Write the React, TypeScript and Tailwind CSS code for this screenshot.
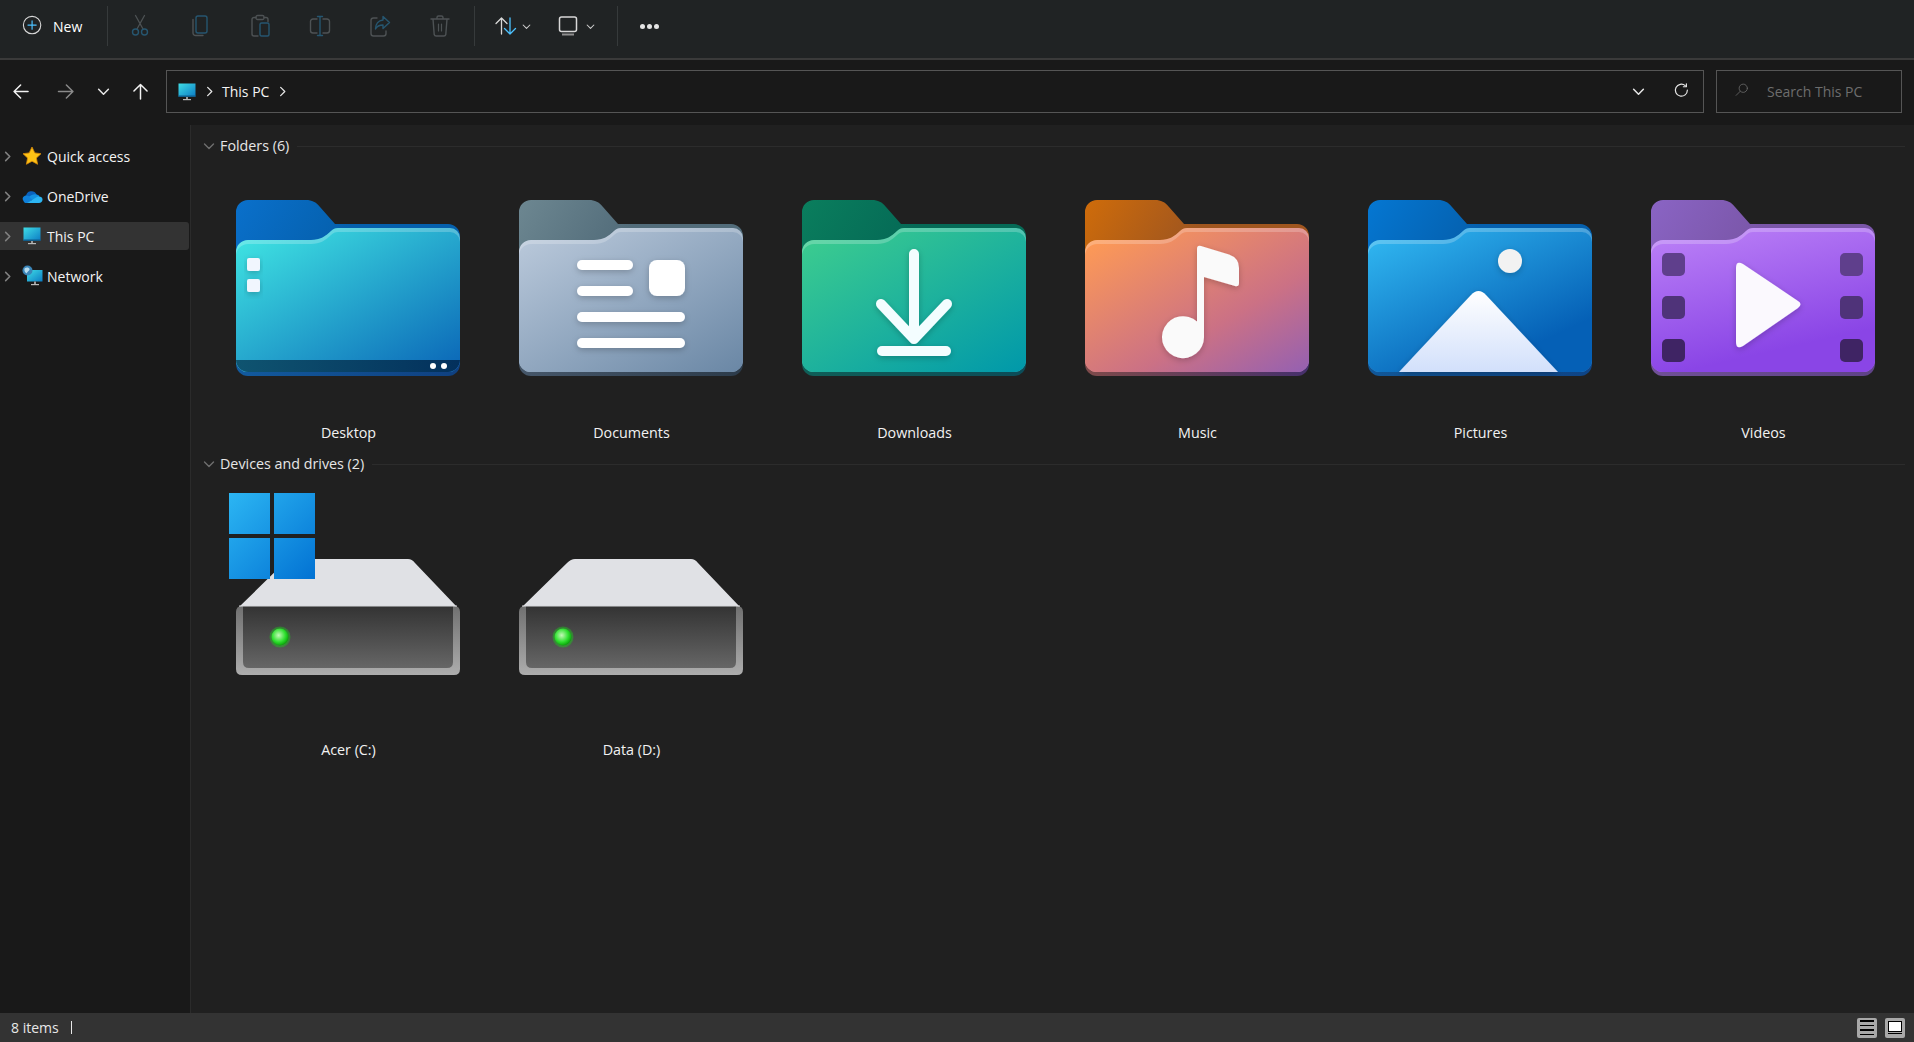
import React from "react";

const font = { fontFamily: '"Open Sans", "Noto Sans", sans-serif' };

function Icon({ size = 24, children, className }: { size?: number; children: React.ReactNode; className?: string }) {
  return (
    <svg width={size} height={size} viewBox="0 0 24 24" fill="none" strokeLinecap="round" strokeLinejoin="round" className={className}>
      {children}
    </svg>
  );
}

const GREY = "#4d5254";
const BLUE = "#265670";

function Chevron({ dir = "down", color = "#ddd", size = 12, weight = 1.4 }: { dir?: "down" | "right"; color?: string; size?: number; weight?: number }) {
  return (
    <svg width={size} height={size} viewBox="0 0 12 12" fill="none">
      <path d={dir === "down" ? "M1.5 4l4.5 4.5L10.5 4" : "M4 1.5L8.5 6 4 10.5"} stroke={color} strokeWidth={weight} strokeLinecap="round" strokeLinejoin="round" />
    </svg>
  );
}

function Monitor({ size = 20 }: { size?: number }) {
  return (
    <svg width={size} height={size} viewBox="0 0 20 20">
      <defs>
        <linearGradient id="mon" x1="0" y1="0" x2="1" y2="1">
          <stop offset="0" stopColor="#3fdde6" />
          <stop offset="1" stopColor="#0c7cc4" />
        </linearGradient>
      </defs>
      <rect x="1.5" y="1.5" width="17" height="13" fill="url(#mon)" />
      <rect x="1.5" y="13.5" width="17" height="1.5" fill="#0f5d8c" />
      <rect x="9" y="15" width="2" height="2" fill="#9a9a9a" />
      <rect x="6" y="17" width="8" height="1.2" fill="#b8b8b8" />
    </svg>
  );
}

function ToolbarButton({ children }: { children: React.ReactNode }) {
  return <div className="flex h-full w-[60px] items-center justify-center">{children}</div>;
}

function Separator() {
  return <div className="h-[40px] w-px bg-[#363a3b]" />;
}

function Toolbar() {
  return (
    <div className="flex h-[60px] shrink-0 items-center border-b-2 border-[#3a3a3a] bg-[#202324] pb-[6px]">
      <div className="flex w-[107px] items-center pl-[22px]">
        <Icon size={22}>
          <circle cx="11" cy="11" r="9.500" stroke="#d8d8d8" strokeWidth="1.200" />
          <path d="M11 6.500v9M6.500 11h9" stroke="#4cc2ff" strokeWidth="1.300" />
        </Icon>
        <span className="ml-[9px] text-[14px] text-white">New</span>
      </div>
      <Separator />
      <div className="ml-[2px] flex h-full">
        <ToolbarButton>
          <Icon>
            <path d="M7.500 1.500L15 15M16.500 1.500L9 15" stroke={GREY} strokeWidth="1.300" />
            <circle cx="7.500" cy="18" r="3" stroke={BLUE} strokeWidth="1.400" />
            <circle cx="16.500" cy="18" r="3" stroke={BLUE} strokeWidth="1.400" />
          </Icon>
        </ToolbarButton>
        <ToolbarButton>
          <Icon>
            <rect x="8" y="2" width="11" height="17" rx="2" stroke={BLUE} strokeWidth="1.400" />
            <path d="M8 21.500h7M5 5.500v13.500a2.500 2.500 0 0 0 2.500 2.500" stroke={GREY} strokeWidth="1.400" />
          </Icon>
        </ToolbarButton>
        <ToolbarButton>
          <Icon>
            <path d="M8 3.500H6a2 2 0 0 0-2 2V20a2 2 0 0 0 2 2h4M16 3.500h2a2 2 0 0 1 2 2v2" stroke={GREY} strokeWidth="1.400" />
            <rect x="8" y="1.500" width="8" height="4" rx="1.500" stroke={GREY} strokeWidth="1.300" />
            <rect x="12" y="9" width="9" height="13" rx="1.500" stroke={BLUE} strokeWidth="1.400" />
          </Icon>
        </ToolbarButton>
        <ToolbarButton>
          <Icon>
            <path d="M9 5H5a2.500 2.500 0 0 0-2.500 2.500v9A2.500 2.500 0 0 0 5 19h4M15 5h4a2.500 2.500 0 0 1 2.500 2.500v9A2.500 2.500 0 0 1 19 19h-4" stroke={GREY} strokeWidth="1.400" />
            <path d="M12 2.500v19M9.500 2.500h5M9.500 21.500h5" stroke={BLUE} strokeWidth="1.400" />
          </Icon>
        </ToolbarButton>
        <ToolbarButton>
          <Icon>
            <path d="M9 4H5.500A2.500 2.500 0 0 0 3 6.500v13A2.500 2.500 0 0 0 5.500 22h10a2.500 2.500 0 0 0 2.500-2.500V17" stroke={GREY} strokeWidth="1.400" />
            <path d="M15 2.500l6.500 6L15 14.500V11c-3.500 0-6 1-7.500 4 0-5 3-8.500 7.500-9z" stroke={BLUE} strokeWidth="1.400" />
          </Icon>
        </ToolbarButton>
        <ToolbarButton>
          <Icon>
            <path d="M3 5h18M9 5V3.500A1.500 1.500 0 0 1 10.500 2h3A1.500 1.500 0 0 1 15 3.500V5M5 5l1.200 15.500A2 2 0 0 0 8.200 22h7.600a2 2 0 0 0 2-1.500L19 5" stroke={GREY} strokeWidth="1.400" />
            <path d="M10.500 10v7M13.500 10v7" stroke={GREY} strokeWidth="1.200" />
          </Icon>
        </ToolbarButton>
      </div>
      <div className="ml-[4px]">
        <Separator />
      </div>
      <div className="ml-[19px] flex items-center">
        <Icon>
          <path d="M7.500 20V4M2 9.500L7.500 4 13 9.500" stroke="#d8d8d8" strokeWidth="1.300" />
          <path d="M16 4v16M10.500 14.500L16 20l5.500-5.500" stroke="#4cc2ff" strokeWidth="1.300" />
        </Icon>
        <div className="ml-[4px]">
          <Chevron size={9} color="#cfcfcf" />
        </div>
      </div>
      <div className="ml-[25px] flex items-center">
        <Icon>
          <rect x="3.500" y="3" width="17" height="14.500" rx="2" stroke="#d8d8d8" strokeWidth="1.500" />
          <rect x="6" y="19.500" width="12" height="2" fill="#8f8f8f" />
        </Icon>
        <div className="ml-[6px]">
          <Chevron size={9} color="#cfcfcf" />
        </div>
      </div>
      <div className="ml-[22px]">
        <Separator />
      </div>
      <div className="ml-[22px] flex gap-[2px]">
        <span className="h-[5px] w-[5px] rounded-full bg-[#e4e4e4]" />
        <span className="h-[5px] w-[5px] rounded-full bg-[#e4e4e4]" />
        <span className="h-[5px] w-[5px] rounded-full bg-[#e4e4e4]" />
      </div>
    </div>
  );
}

function NavBar() {
  return (
    <div className="flex h-[65px] shrink-0 items-center bg-[#191919] pb-[2px]">
      <div className="flex w-[166px] items-center">
        <div className="ml-[11px]">
          <Icon size={21}>
            <path d="M19.500 12H4M11 4.500L3.500 12l7.500 7.500" stroke="#f2f2f2" strokeWidth="1.700" />
          </Icon>
        </div>
        <div className="ml-[23px]">
          <Icon size={21}>
            <path d="M4 12h15.500M13 4.500l7.500 7.500-7.500 7.500" stroke="#8a8a8a" strokeWidth="1.700" />
          </Icon>
        </div>
        <div className="ml-[21px]">
          <Chevron size={13} color="#e6e6e6" />
        </div>
        <div className="ml-[20px]">
          <Icon size={21}>
            <path d="M12 20.500V4M4.500 11.500L12 4l7.500 7.500" stroke="#f2f2f2" strokeWidth="1.700" />
          </Icon>
        </div>
      </div>
      <div className="flex h-[43px] w-[1538px] items-center border border-[#555] pl-[10px] pr-[11px]">
        <Monitor size={20} />
        <div className="ml-[7px]">
          <Chevron dir="right" size={11} color="#e6e6e6" />
        </div>
        <span className="ml-[7px] text-[14px] text-[#f4f4f4]">This PC</span>
        <div className="ml-[8px]">
          <Chevron dir="right" size={11} color="#e6e6e6" />
        </div>
        <div className="ml-auto">
          <Chevron size={13} color="#e6e6e6" />
        </div>
        <div className="ml-[29px]">
          <Icon size={18}>
            <path d="M15 3.500a8 8 0 1 0 2.800 6" stroke="#e8e8e8" strokeWidth="1.600" />
            <path d="M16.500 1v4h-4" stroke="#e8e8e8" strokeWidth="1.600" />
          </Icon>
        </div>
      </div>
      <div className="ml-[12px] flex h-[43px] w-[186px] items-center border border-[#555] pl-[18px]">
        <Icon size={18}>
          <circle cx="11" cy="7" r="5.500" stroke="#6a6a6a" strokeWidth="1.100" />
          <path d="M7 11l-5.500 5.500" stroke="#6a6a6a" strokeWidth="1.100" />
        </Icon>
        <span className="ml-[14px] text-[14px] text-[#6d6d6d]">Search This PC</span>
      </div>
    </div>
  );
}

function SidebarRow({ label, icon, active }: { label: string; icon: React.ReactNode; active?: boolean }) {
  return (
    <div className={`flex h-[28px] w-[189px] items-center rounded-r-[3px] ${active ? "bg-[#333333]" : ""}`}>
      <div className="ml-[1px] flex w-[12px] justify-center">
        <Chevron dir="right" size={11} color="#808080" weight={1.7} />
      </div>
      <div className="ml-[8px] flex w-[22px] justify-center">{icon}</div>
      <span className="ml-[4px] text-[14px] text-[#f4f4f4]">{label}</span>
    </div>
  );
}

function Sidebar() {
  return (
    <div className="flex w-[191px] shrink-0 flex-col gap-[12px] border-r border-[#2b2b2b] bg-[#191919] pt-[17px]">
      <SidebarRow
        label="Quick access"
        icon={
          <svg width="20" height="20" viewBox="0 0 20 20">
            <path d="M10 1l2.800 5.900 6.200.8-4.600 4.300 1.200 6.300L10 15.200l-5.600 3.100 1.200-6.300L1 7.700l6.200-.8z" fill="#fdc215" stroke="#d98a07" strokeWidth="0.800" strokeLinejoin="round" />
          </svg>
        }
      />
      <SidebarRow
        label="OneDrive"
        icon={
          <svg width="21" height="20" viewBox="0 0 21 20">
            <path d="M4 10.500a5.500 5.500 0 0 1 10.500-2 4.500 4.500 0 0 1 3 1.500L9 13z" fill="#0a62bd" />
            <path d="M1 14c-1-2 .5-4.500 3.500-4.500 1 0 2 .4 3 1l4 2.500L6 17H3.500C2.500 17 1.500 15.500 1 14z" fill="#0f80d9" />
            <path d="M7 11c2.500-2.500 6-3.500 8.500-2 1 .5 1.500 1 2 1.500L12 15z" fill="#1490df" />
            <path d="M5 17l10-6c2-1 5.500-.5 5.500 2.500 0 2-1.500 3.500-3.500 3.500z" fill="#2cb5f2" />
          </svg>
        }
      />
      <SidebarRow label="This PC" active icon={<Monitor size={20} />} />
      <SidebarRow
        label="Network"
        icon={
          <svg width="21" height="22" viewBox="0 0 21 22">
            <defs>
              <linearGradient id="net" x1="0" y1="0" x2="1" y2="1">
                <stop offset="0" stopColor="#3fdde6" />
                <stop offset="1" stopColor="#0c7cc4" />
              </linearGradient>
            </defs>
            <rect x="5" y="5" width="15.500" height="11.500" fill="url(#net)" />
            <rect x="12" y="16.500" width="2" height="2.500" fill="#9a9a9a" />
            <rect x="9" y="19" width="8" height="1.200" fill="#b8b8b8" />
            <circle cx="5.500" cy="5.500" r="5" fill="#3b85b8" />
            <path d="M2.500 3.500c2-1.500 4.500-1 5 .5s-2 2.500-3 4.500c-1.500-1-2.500-3-2-5z" fill="#b7dcef" />
          </svg>
        }
      />
    </div>
  );
}

function Folder({
  id,
  back,
  front,
  strip,
  dir = [115, 236],
  under,
  children,
}: {
  id: string;
  back: [string, string];
  front: [string, string, string?];
  strip: [string, string];
  dir?: [number, number];
  under?: React.ReactNode;
  children?: React.ReactNode;
}) {
  const lip = "M0 52A12 12 0 0 1 12 40H75C84 40 90 36 95 31C97 29 99 28 102 28H214A10 10 0 0 1 224 38V160A12 12 0 0 1 212 172H12A12 12 0 0 1 0 160Z";
  const body = "M0 56A12 12 0 0 1 12 44H75C84 44 90 40 95 35C97 33 99 32 102 32H214A10 10 0 0 1 224 42V160A12 12 0 0 1 212 172H12A12 12 0 0 1 0 160Z";
  return (
    <svg width="224" height="176" viewBox="0 0 224 176">
      <defs>
        <linearGradient id={`${id}-b`} gradientUnits="userSpaceOnUse" x1="0" y1="0" x2="90" y2="60">
          <stop offset="0" stopColor={back[0]} />
          <stop offset="1" stopColor={back[1]} />
        </linearGradient>
        <linearGradient id={`${id}-s`} gradientUnits="userSpaceOnUse" x1="0" y1="0" x2="224" y2="0">
          <stop offset="0" stopColor={strip[0]} />
          <stop offset="1" stopColor={strip[1]} />
        </linearGradient>
        <linearGradient id={`${id}-f`} gradientUnits="userSpaceOnUse" x1="0" y1="40" x2={dir[0]} y2={dir[1]}>
          <stop offset="0" stopColor={front[0]} />
          {front[2] ? <stop offset="0.62" stopColor={front[1]} /> : null}
          <stop offset="1" stopColor={front[2] ?? front[1]} />
        </linearGradient>
        <filter id={`${id}-sh`} x="-20%" y="-20%" width="140%" height="140%">
          <feDropShadow dx="0" dy="2" stdDeviation="3" floodColor="#000" floodOpacity="0.22" />
        </filter>
      </defs>
      <path d="M0 60H224V164A12 12 0 0 1 212 176H12A12 12 0 0 1 0 164Z" fill={`url(#${id}-s)`} />
      <path d="M12 0H70C76 0 80 2 84 7L99 24H212A12 12 0 0 1 224 36V60H0V12A12 12 0 0 1 12 0Z" fill={`url(#${id}-b)`} />
      <path d={lip} fill={`url(#${id}-f)`} />
      <path d={lip} fill="#fff" opacity="0.22" />
      <path d={body} fill={`url(#${id}-f)`} />
      {under}
      <g filter={`url(#${id}-sh)`}>{children}</g>
    </svg>
  );
}

function DesktopFolder() {
  return (
    <Folder
      id="desk"
      back={["#0a70cb", "#0560ad"]}
      front={["#3fe3e2", "#0a65b7"]}
      strip={["#125a9e", "#0f4080"]}
      under={
        <>
          <defs>
            <linearGradient id="desk-bar" x1="0" y1="0" x2="1" y2="0">
              <stop offset="0" stopColor="#0f5470" />
              <stop offset="1" stopColor="#03305c" />
            </linearGradient>
          </defs>
          <path d="M0 160H224C224 167 218 172 212 172H12C6 172 0 167 0 160Z" fill="url(#desk-bar)" />
          <circle cx="197" cy="166" r="3" fill="#fff" />
          <circle cx="208" cy="166" r="3" fill="#fff" />
        </>
      }
    >
      <rect x="11" y="58" width="13" height="13" rx="2" fill="#f1f6fe" />
      <rect x="11" y="79" width="13" height="13" rx="2" fill="#f1f6fe" />
    </Folder>
  );
}

function DocumentsFolder() {
  return (
    <Folder id="docs" back={["#6d8791", "#526c7a"]} front={["#b9c8da", "#6a87a5"]} strip={["#46576a", "#2c3b4a"]}>
      <rect x="58" y="60" width="56" height="10" rx="5" fill="#fff" />
      <rect x="58" y="86" width="56" height="10" rx="5" fill="#fff" />
      <rect x="130" y="60" width="36" height="36" rx="8" fill="#fff" />
      <rect x="58" y="112" width="108" height="10" rx="5" fill="#fff" />
      <rect x="58" y="138" width="108" height="10" rx="5" fill="#fff" />
    </Folder>
  );
}

function DownloadsFolder() {
  return (
    <Folder id="down" back={["#0a7e5d", "#056a56"]} front={["#3ccc8f", "#0098aa"]} strip={["#0f5f58", "#0c4c58"]}>
      <path d="M112 54V139M79 104L112 139L145 104" fill="none" stroke="#f3fdff" strokeWidth="10" strokeLinecap="round" strokeLinejoin="round" />
      <rect x="75" y="146" width="74" height="10" rx="5" fill="#f3fdff" />
    </Folder>
  );
}

function MusicFolder() {
  return (
    <Folder id="music" back={["#cf6c0a", "#a0561f"]} front={["#ff9b54", "#cb7185", "#9460b2"]} strip={["#7e4a4a", "#46306c"]}>
      <path
        d="M112 49Q112 45 116 46L144 54.500Q154 58 154 68V83Q154 87 150 86L119 77V137A21 21 0 1 1 112 121.500Z"
        fill="#fafafa"
      />
    </Folder>
  );
}

function PicturesFolder() {
  return (
    <Folder id="pics" back={["#0577d2", "#0560ae"]} front={["#30b6f0", "#0560b6"]} strip={["#115798", "#0e4486"]} dir={[70, 190]}>
      <defs>
        <linearGradient id="mtn" x1="0" y1="0" x2="0" y2="1">
          <stop offset="0" stopColor="#ffffff" />
          <stop offset="1" stopColor="#d2e0fb" />
        </linearGradient>
      </defs>
      <ellipse cx="142" cy="61" rx="12" ry="12" fill="#f2f2f2" />
      <path d="M31 172L103 95Q110.500 87 118 95L190 172Z" fill="url(#mtn)" />
    </Folder>
  );
}

function VideosFolder() {
  const ys = [53, 96, 139];
  const shades = ["#5f3f8c", "#4f3379", "#3f2464"];
  return (
    <Folder
      id="vids"
      back={["#8a64c4", "#7a56a8"]}
      front={["#b97ef6", "#8a45e6"]}
      strip={["#705097", "#5f4288"]}
      dir={[30, 172]}
      under={ys.map((y, i) => (
        <React.Fragment key={y}>
          <rect x="11" y={y} width="23" height="23" rx="5" fill={shades[i]} />
          <rect x="189" y={y} width="23" height="23" rx="5" fill={shades[i]} />
        </React.Fragment>
      ))}
    >
      <path d="M85 68Q85 60 92 64L147 101Q152 104 147 108L92 146Q85 150 85 142Z" fill="#fbf9fe" />
    </Folder>
  );
}

function Drive({ id }: { id: string }) {
  return (
    <svg width="224" height="176" viewBox="0 0 224 176">
      <defs>
        <linearGradient id={`${id}-m`} x1="0" y1="0" x2="0" y2="1">
          <stop offset="0" stopColor="#707070" />
          <stop offset="1" stopColor="#adadad" />
        </linearGradient>
        <linearGradient id={`${id}-i`} x1="0" y1="0" x2="0" y2="1">
          <stop offset="0" stopColor="#333333" />
          <stop offset="1" stopColor="#666666" />
        </linearGradient>
        <radialGradient id={`${id}-l`} cx="0.42" cy="0.4" r="0.6">
          <stop offset="0" stopColor="#c4f8b8" />
          <stop offset="0.65" stopColor="#2fe02f" />
          <stop offset="1" stopColor="#0ca50c" />
        </radialGradient>
      </defs>
      <path d="M3 91L48 47Q52 43 56 43H172Q176 43 179 47L221 91Z" fill="#e0e1e5" />
      <path d="M0 96Q0 90 6 90H218Q224 90 224 96V153Q224 159 218 159H6Q0 159 0 153Z" fill={`url(#${id}-m)`} />
      <path d="M7 90H217V146Q217 152 211 152H13Q7 152 7 146Z" fill={`url(#${id}-i)`} />
      <path d="M3 90H221" stroke="#d8d9dc" strokeWidth="1" />
      <circle cx="44" cy="121" r="10.500" fill="#16d916" opacity="0.4" />
      <circle cx="44" cy="121" r="8.500" fill={`url(#${id}-l)`} />
    </svg>
  );
}

function WindowsBadge() {
  return (
    <svg width="86" height="86" viewBox="0 0 86 86" className="absolute left-[-7px] top-[-23px]">
      <defs>
        <linearGradient id="win" gradientUnits="userSpaceOnUse" x1="0" y1="0" x2="86" y2="86">
          <stop offset="0" stopColor="#2cb6f3" />
          <stop offset="1" stopColor="#0272d3" />
        </linearGradient>
      </defs>
      <rect x="0" y="0" width="41" height="41" fill="url(#win)" />
      <rect x="45" y="0" width="41" height="41" fill="url(#win)" />
      <rect x="0" y="45" width="41" height="41" fill="url(#win)" />
      <rect x="45" y="45" width="41" height="41" fill="url(#win)" />
    </svg>
  );
}

function Tile({ label, low, children }: { label: string; low?: boolean; children: React.ReactNode }) {
  return (
    <div className="flex w-[224px] flex-col items-center">
      <div className="relative h-[176px] w-[224px]">{children}</div>
      <div className={`${low ? "mt-[48px]" : "mt-[47px]"} h-[20px] whitespace-nowrap pl-px text-[14.3px] leading-[20px] text-[#f2f2f2]`}>{label}</div>
    </div>
  );
}

function SectionHeader({ title }: { title: string }) {
  return (
    <div className="flex h-[22px] items-center pl-[12px] pr-[9px]">
      <Chevron size={12} color="#6e6e6e" />
      <span className="ml-[5px] text-[14.3px] text-[#e6e6e6]">{title}</span>
      <div className="ml-[8px] h-px flex-1 bg-[#2c2c2c]" />
    </div>
  );
}

function MainPane() {
  return (
    <div className="min-w-0 flex-1 overflow-hidden bg-[#202020] pt-[10px]">
      <SectionHeader title="Folders (6)" />
      <div className="grid grid-cols-[repeat(6,224px)] gap-x-[59px] pl-[45px] pt-[43px]">
        <Tile label="Desktop"><DesktopFolder /></Tile>
        <Tile label="Documents"><DocumentsFolder /></Tile>
        <Tile label="Downloads"><DownloadsFolder /></Tile>
        <Tile label="Music"><MusicFolder /></Tile>
        <Tile label="Pictures"><PicturesFolder /></Tile>
        <Tile label="Videos"><VideosFolder /></Tile>
      </div>
      <div className="mt-[10px]">
        <SectionHeader title="Devices and drives (2)" />
      </div>
      <div className="grid grid-cols-[repeat(6,224px)] gap-x-[59px] pl-[45px] pt-[41px]">
        <Tile label="Acer (C:)" low>
          <Drive id="c" />
          <WindowsBadge />
        </Tile>
        <Tile label="Data (D:)" low><Drive id="d" /></Tile>
      </div>
    </div>
  );
}

function StatusBar() {
  return (
    <div className="flex h-[29px] shrink-0 items-center bg-[#333333] pl-[11px] pr-[9px]">
      <span className="text-[14px] text-[#e8e8e8]">8 items</span>
      <div className="ml-[12px] h-[13px] w-px bg-[#e8e8e8]" />
      <div className="ml-auto flex gap-[8px]">
        <div className="flex h-[20px] w-[20px] flex-col justify-center gap-[3px] rounded-[2px] bg-[#a8a8a8] px-[3px]">
          <div className="h-[1.5px] bg-black" />
          <div className="h-[1.5px] bg-black" />
          <div className="h-[1.5px] bg-black" />
          <div className="h-[1.5px] bg-black" />
        </div>
        <div className="flex h-[20px] w-[20px] flex-col gap-[1px] rounded-[2px] bg-[#a8a8a8] px-[3px] pt-[3px]">
          <div className="h-[11px] border border-black bg-white" />
          <div className="h-[1.5px] bg-black" />
        </div>
      </div>
    </div>
  );
}

export default function App() {
  return (
    <div className="flex h-screen w-full flex-col overflow-hidden bg-[#202020]" style={font}>
      <Toolbar />
      <NavBar />
      <div className="flex min-h-0 flex-1">
        <Sidebar />
        <MainPane />
      </div>
      <StatusBar />
    </div>
  );
}
